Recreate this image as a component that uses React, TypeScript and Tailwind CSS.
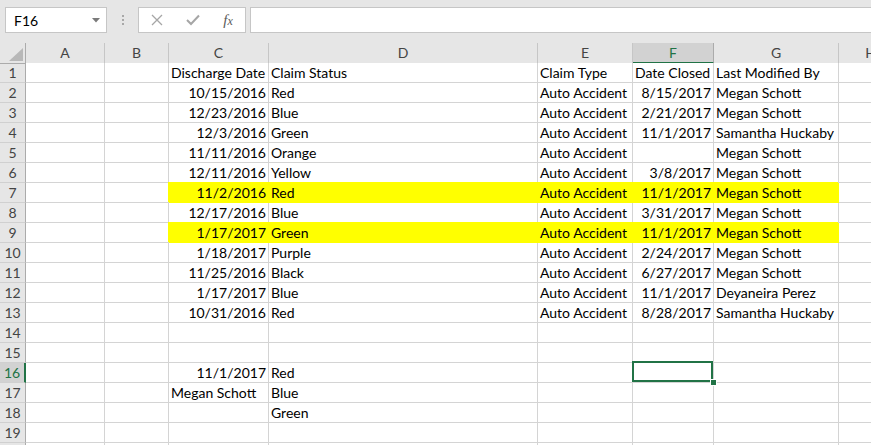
import React from "react";

const font = { fontFamily: "Lato, 'Liberation Sans', sans-serif" };

type Row = {
  c?: string;
  cLeft?: boolean;
  d?: string;
  e?: string;
  f?: string;
  g?: string;
  hl?: boolean;
};

const AA = "Auto Accident";

const rows: Row[] = [
  { c: "Discharge Date", cLeft: true, d: "Claim Status", e: "Claim Type", f: "Date Closed", g: "Last Modified By" },
  { c: "10/15/2016", d: "Red", e: AA, f: "8/15/2017", g: "Megan Schott" },
  { c: "12/23/2016", d: "Blue", e: AA, f: "2/21/2017", g: "Megan Schott" },
  { c: "12/3/2016", d: "Green", e: AA, f: "11/1/2017", g: "Samantha Huckaby" },
  { c: "11/11/2016", d: "Orange", e: AA, f: "", g: "Megan Schott" },
  { c: "12/11/2016", d: "Yellow", e: AA, f: "3/8/2017", g: "Megan Schott" },
  { c: "11/2/2016", d: "Red", e: AA, f: "11/1/2017", g: "Megan Schott", hl: true },
  { c: "12/17/2016", d: "Blue", e: AA, f: "3/31/2017", g: "Megan Schott" },
  { c: "1/17/2017", d: "Green", e: AA, f: "11/1/2017", g: "Megan Schott", hl: true },
  { c: "1/18/2017", d: "Purple", e: AA, f: "2/24/2017", g: "Megan Schott" },
  { c: "11/25/2016", d: "Black", e: AA, f: "6/27/2017", g: "Megan Schott" },
  { c: "1/17/2017", d: "Blue", e: AA, f: "11/1/2017", g: "Deyaneira Perez" },
  { c: "10/31/2016", d: "Red", e: AA, f: "8/28/2017", g: "Samantha Huckaby" },
  {},
  {},
  { c: "11/1/2017", d: "Red" },
  { c: "Megan Schott", cLeft: true, d: "Blue" },
  { d: "Green" },
  {},
  {},
];

const gridCols = "grid grid-cols-[26px_79px_64px_100px_269px_95px_81px_125px_64px]";

// one body cell
const Cell = ({
  text,
  right,
  hl,
  children,
}: {
  text?: string;
  right?: boolean;
  hl?: boolean;
  children?: React.ReactNode;
}) => (
  <div
    className={
      "relative h-[20px] border-r border-b " +
      (hl
        ? "bg-[#ffff00] border-[#ffff00] shadow-[-1px_-1px_0_#ffff00]"
        : "bg-white border-[#d4d4d4]")
    }
  >
    <div
      className={
        "px-[2px] leading-[19px] whitespace-nowrap overflow-hidden text-[14px] text-black " +
        (right ? "text-right" : "text-left")
      }
    >
      {text}
    </div>
    {children}
  </div>
);

const App = () => {
  return (
    <div className="w-[871px] h-[445px] overflow-hidden bg-white" style={font}>
      {/* ===== Formula bar ===== */}
      <div className="h-[43px] bg-[#e6e6e6] flex items-start pt-[7px]">
        {/* Name box */}
        <div className="ml-[5px] w-[102px] h-[26px] bg-white border border-[#c6c6c6] flex items-center justify-between pl-[8px] pr-[6px]">
          <span className="text-[14px] text-black">F16</span>
          <svg width="8" height="5" viewBox="0 0 8 5">
            <path d="M0 0 L8 0 L4 4.5 Z" fill="#7a7a7a" />
          </svg>
        </div>

        {/* separator dots */}
        <div className="w-[31px] h-[26px] flex flex-col items-center justify-center gap-[2px]">
          <span className="w-[2px] h-[2px] bg-[#a8a8a8]" />
          <span className="w-[2px] h-[2px] bg-[#a8a8a8]" />
          <span className="w-[2px] h-[2px] bg-[#a8a8a8]" />
        </div>

        {/* Cancel / Enter / fx */}
        <div className="w-[108px] h-[26px] bg-white border border-[#c6c6c6] flex items-center">
          <div className="w-[36px] flex justify-center">
            <svg width="12" height="12" viewBox="0 0 12 12">
              <path d="M1 1 L11 11 M11 1 L1 11" stroke="#a6a6a6" strokeWidth="1.3" fill="none" />
            </svg>
          </div>
          <div className="w-[36px] flex justify-center">
            <svg width="14" height="12" viewBox="0 0 14 12">
              <path d="M1 6 L5 10 L13 1.5" stroke="#a6a6a6" strokeWidth="2" fill="none" />
            </svg>
          </div>
          <div className="w-[34px] flex justify-center">
            <span
              className="italic text-[15px] text-[#5a5a5a] leading-none"
              style={{ fontFamily: "'Liberation Serif', serif" }}
            >
              f<span className="text-[12px]">x</span>
            </span>
          </div>
        </div>

        {/* Formula input */}
        <div className="ml-[4px] flex-1 h-[26px] bg-white border-y border-l border-[#c6c6c6]" />
      </div>

      {/* ===== Column headers ===== */}
      <div className={gridCols + " h-[20px] bg-[#e6e6e6]"}>
        <div className="relative border-r border-b border-[#ababab]">
          <svg className="absolute right-[2px] bottom-[2px]" width="14" height="13" viewBox="0 0 14 13">
            <path d="M14 0 L14 13 L0 13 Z" fill="#b8b8b8" />
          </svg>
        </div>
        {["A", "B", "C", "D", "E", "F", "G", "H"].map((l) =>
          l === "F" ? (
            <div
              key={l}
              className="border-r border-[#ababab] border-b-2 border-b-[#217346] bg-[#d2d2d2] text-center text-[14px] leading-[19px] text-[#217346]"
            >
              {l}
            </div>
          ) : (
            <div
              key={l}
              className="border-r border-r-[#c6c6c6] border-b border-b-[#ababab] text-center text-[14px] leading-[19px] text-[#444444]"
            >
              {l}
            </div>
          )
        )}
      </div>

      {/* ===== Body rows ===== */}
      {rows.map((r, i) => {
        const n = i + 1;
        const sel = n === 16;
        return (
          <div key={n} className={gridCols}>
            <div
              className={
                "h-[20px] border-b border-b-[#d0d0d0] text-center text-[14px] leading-[19px] " +
                (sel
                  ? "bg-[#d2d2d2] border-r-2 border-r-[#217346] text-[#217346]"
                  : "bg-[#e6e6e6] border-r border-r-[#ababab] text-[#444444]")
              }
            >
              {n < 20 ? n : ""}
            </div>
            <Cell />
            <Cell />
            <Cell text={r.c} right={!r.cLeft} hl={r.hl} />
            <Cell text={r.d} hl={r.hl} />
            <Cell text={r.e} hl={r.hl} />
            <Cell text={r.f} right={n !== 1} hl={r.hl}>
              {sel && (
                <>
                  <div className="absolute -left-px -top-[2px] right-0 bottom-0 border-2 border-[#217346] z-10" />
                  <div className="absolute left-[77px] top-[16px] w-[7px] h-[7px] bg-white p-px z-20">
                    <div className="w-full h-full bg-[#217346]" />
                  </div>
                </>
              )}
            </Cell>
            <Cell text={r.g} hl={r.hl} />
            <Cell />
          </div>
        );
      })}
    </div>
  );
};

export default App;
